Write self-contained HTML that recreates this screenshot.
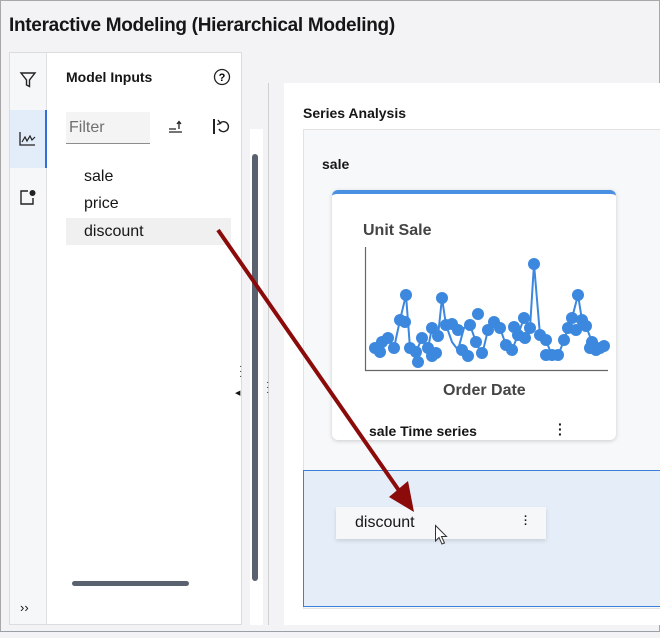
<!DOCTYPE html>
<html><head><style>
*{margin:0;padding:0;box-sizing:border-box}
body{width:660px;height:638px;background:#f3f3f5;font-family:"Liberation Sans",sans-serif;position:relative;overflow:hidden;color:#161616}
.a{position:absolute}
</style></head><body>
<div class="a" style="left:0;top:0;width:660px;height:638px;border:1px solid #a8a8a8;border-bottom:none"></div>
<div class="a" style="left:0;top:631px;width:660px;height:7px;border-top:1px solid #9aa0a8;background:#f3f3f5"></div>
<div class="a" style="left:9px;top:15px;font-size:19px;font-weight:bold;letter-spacing:-0.3px">Interactive Modeling (Hierarchical Modeling)</div>
<div class="a" style="left:9px;top:52px;width:233px;height:573px;border:1px solid #dcdcdc;background:#fff"></div>
<div class="a" style="left:10px;top:53px;width:37px;height:571px;background:#f6f7f9;border-right:1px solid #e0e0e0"></div>
<div class="a" style="left:10px;top:110px;width:37px;height:58px;background:#e3ecf9;border-right:2px solid #2f6fd6"></div>
<svg class="a" style="left:18px;top:70px" width="20" height="20" viewBox="0 0 20 20"><path d="M3 3H17L11.5 10V16.5L8.5 15V10Z" fill="none" stroke="#222" stroke-width="1.4"/></svg>
<svg class="a" style="left:18px;top:129px" width="20" height="20" viewBox="0 0 20 20"><path d="M2 3V16H17" fill="none" stroke="#222" stroke-width="1.3"/><path d="M4 13L7 8L9 12L12 7L14 11L17 8" fill="none" stroke="#222" stroke-width="1.2"/></svg>
<svg class="a" style="left:18px;top:187px" width="20" height="20" viewBox="0 0 20 20"><path d="M10 4H3V17H15V11" fill="none" stroke="#222" stroke-width="1.4"/><circle cx="14.5" cy="6" r="3" fill="#222"/></svg>
<div class="a" style="left:20px;top:600px;font-size:13px">››</div>
<div class="a" style="left:66px;top:69px;font-size:14px;font-weight:bold">Model Inputs</div>
<svg class="a" style="left:212px;top:67px" width="20" height="20" viewBox="0 0 20 20"><circle cx="10" cy="10" r="7.5" fill="none" stroke="#222" stroke-width="1.3"/><text x="10" y="14" font-size="11" font-weight="bold" text-anchor="middle" font-family="Liberation Sans">?</text></svg>
<div class="a" style="left:66px;top:112px;width:84px;height:32px;background:#f4f4f4;border-bottom:1px solid #8d8d8d;font-size:16px;color:#6f6f6f;padding:7px 3px">Filter</div>
<svg class="a" style="left:166px;top:117px" width="20" height="20" viewBox="0 0 20 20"><path d="M3 12H10M3 15H16" stroke="#222" stroke-width="1.3"/><path d="M13 12V5M11 7L13 4.5L15 7" fill="none" stroke="#222" stroke-width="1.3"/></svg>
<svg class="a" style="left:210px;top:116px" width="22" height="22" viewBox="0 0 22 22"><path d="M4 3V18" stroke="#222" stroke-width="2"/><path d="M10 7A5 5 0 1 1 9 13" fill="none" stroke="#222" stroke-width="1.4"/><path d="M8 4L10.5 7.5L7 8.5" fill="none" stroke="#222" stroke-width="1.4"/></svg>
<div class="a" style="left:84px;top:168px;font-size:16px">sale</div>
<div class="a" style="left:84px;top:195px;font-size:16px">price</div>
<div class="a" style="left:66px;top:218px;width:165px;height:27px;background:#f0f0f0"></div>
<div class="a" style="left:84px;top:223px;font-size:16px">discount</div>
<div class="a" style="left:72px;top:581px;width:117px;height:5px;border-radius:3px;background:#5a6270"></div>
<div class="a" style="left:250px;top:129px;width:13px;height:496px;background:#fff"></div>
<div class="a" style="left:252px;top:154px;width:6px;height:427px;border-radius:3px;background:#5a6270"></div>
<div class="a" style="left:268px;top:83px;width:1px;height:542px;background:#d0d0d0"></div>
<div class="a" style="left:239px;top:364px;font-size:10px;line-height:5px;color:#333">·<br>·<br>·</div>
<div class="a" style="left:235px;top:389px;font-size:7px">◀</div>
<div class="a" style="left:266px;top:380px;font-size:10px;line-height:5px;color:#333">·<br>·<br>·</div>
<div class="a" style="left:284px;top:83px;width:376px;height:542px;background:#fff"></div>
<div class="a" style="left:303px;top:105px;font-size:14px;font-weight:bold">Series Analysis</div>
<div class="a" style="left:303px;top:129px;width:357px;height:480px;background:#f7f8fa;border:1px solid #e2e2e2;border-right:none"></div>
<div class="a" style="left:322px;top:156px;font-size:14px;font-weight:bold">sale</div>
<div class="a" style="left:332px;top:190px;width:284px;height:250px;background:#fff;border-radius:6px;border-top:4px solid #4a90e2;box-shadow:0 1px 4px rgba(0,0,0,.18)"></div>
<div class="a" style="left:363px;top:222px;font-size:16px;font-weight:bold;color:#444">Unit Sale</div>
<svg class="a" style="left:360px;top:240px" width="252" height="135">
<path d="M5.5 7V130.5H248" fill="none" stroke="#666" stroke-width="1.2"/>
<polyline points="15,108 22,102 28,98 34,108 40,80 46,55 50,108 56,112 62,98 68,108 72,88 78,96 82,58 86,85 92,102 98,110 104,88 110,85 116,102 122,115 128,90 134,82 140,88 146,105 152,110 158,95 164,78 170,88 174,24 180,95 186,100 192,116 198,116 204,100 208,88 212,78 218,55 222,80 226,86 232,102 236,110 240,108" fill="none" stroke="#3b88de" stroke-width="2"/>
<g fill="#3b88de">
<circle cx="15" cy="108" r="6"/><circle cx="22" cy="102" r="6"/><circle cx="28" cy="98" r="6"/><circle cx="20" cy="112" r="6"/><circle cx="34" cy="108" r="6"/><circle cx="40" cy="80" r="6"/><circle cx="46" cy="55" r="6"/><circle cx="45" cy="82" r="6"/><circle cx="50" cy="108" r="6"/><circle cx="56" cy="112" r="6"/><circle cx="58" cy="122" r="6"/><circle cx="62" cy="98" r="6"/><circle cx="68" cy="108" r="6"/><circle cx="72" cy="88" r="6"/><circle cx="72" cy="116" r="6"/><circle cx="78" cy="96" r="6"/><circle cx="82" cy="58" r="6"/><circle cx="76" cy="113" r="6"/><circle cx="86" cy="85" r="6"/><circle cx="92" cy="84" r="6"/><circle cx="98" cy="90" r="6"/><circle cx="102" cy="110" r="6"/><circle cx="108" cy="116" r="6"/><circle cx="110" cy="85" r="6"/><circle cx="116" cy="102" r="6"/><circle cx="118" cy="74" r="6"/><circle cx="122" cy="113" r="6"/><circle cx="128" cy="90" r="6"/><circle cx="134" cy="82" r="6"/><circle cx="140" cy="88" r="6"/><circle cx="146" cy="105" r="6"/><circle cx="152" cy="110" r="6"/><circle cx="158" cy="95" r="6"/><circle cx="154" cy="87" r="6"/><circle cx="164" cy="78" r="6"/><circle cx="165" cy="98" r="6"/><circle cx="170" cy="88" r="6"/><circle cx="174" cy="24" r="6"/><circle cx="180" cy="95" r="6"/><circle cx="186" cy="100" r="6"/><circle cx="186" cy="115" r="6"/><circle cx="192" cy="115" r="6"/><circle cx="198" cy="115" r="6"/><circle cx="204" cy="100" r="6"/><circle cx="208" cy="88" r="6"/><circle cx="212" cy="78" r="6"/><circle cx="218" cy="55" r="6"/><circle cx="222" cy="80" r="6"/><circle cx="226" cy="86" r="6"/><circle cx="216" cy="90" r="6"/><circle cx="232" cy="102" r="6"/><circle cx="236" cy="110" r="6"/><circle cx="240" cy="108" r="6"/><circle cx="230" cy="108" r="6"/><circle cx="244" cy="106" r="6"/>
</g>
</svg>
<div class="a" style="left:443px;top:382px;font-size:16px;font-weight:bold;color:#444">Order Date</div>
<div class="a" style="left:369px;top:423px;font-size:14px;font-weight:bold">sale Time series</div>
<div class="a" style="left:558px;top:422px;font-size:14px;line-height:5px;font-weight:bold">·<br>·<br>·</div>
<div class="a" style="left:303px;top:470px;width:357px;height:137px;background:#e5edf8;border:1px solid #3a7fd8;border-right:none"></div>
<div class="a" style="left:336px;top:507px;width:210px;height:32px;background:#f6f7f9;box-shadow:0 2px 4px rgba(0,0,0,.12)"></div>
<div class="a" style="left:355px;top:514px;font-size:16px">discount</div>
<div class="a" style="left:524px;top:515px;font-size:11px;line-height:4px;font-weight:bold">·<br>·<br>·</div>
<svg class="a" style="left:434px;top:524px" width="16" height="22" viewBox="0 0 16 22"><path d="M1.5 1.5V17L5 13.5L8 20L10.5 19L7.5 12.5H12.5Z" fill="#fff" stroke="#333" stroke-width="1"/></svg>
<svg class="a" style="left:0;top:0" width="660" height="638"><line x1="218" y1="230" x2="400" y2="492" stroke="#8b0a0a" stroke-width="4"/><path d="M389 497L414 512L408 481Z" fill="#8b0a0a"/></svg>
</body></html>
